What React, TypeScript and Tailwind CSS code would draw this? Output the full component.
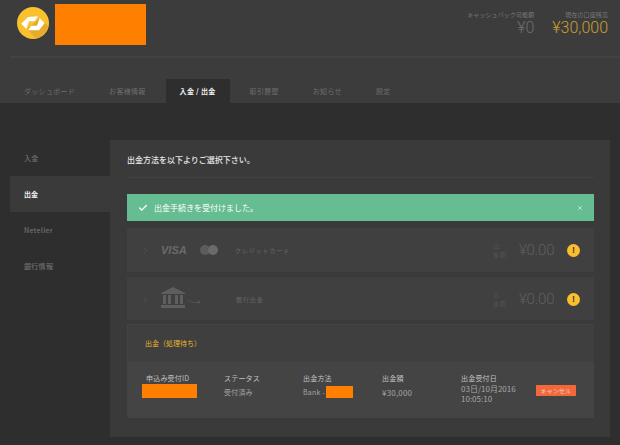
import { ChevronRight, Check, X } from "lucide-react";

const font = "font-['Noto_Sans_CJK_JP','Liberation_Sans',sans-serif]";

const tabs = ["ダッシュボード", "お客様情報", "入金 / 出金", "取引履歴", "お知らせ", "設定"];
const sideItems = ["入金", "出金", "Neteller", "銀行情報"];

function Logo() {
	return (
		<svg width="32" height="32" viewBox="0 0 32 32" className="shrink-0">
			<circle cx="16" cy="16" r="16" fill="#fbc02d" />
			<path d="M10 22 L19 31.7 A16 16 0 0 0 31.6 19.5 L23 11 Z" fill="#e5ab2c" />
			<path d="M4.3 16.7 L11 10 L21 9.3 L17.7 14.3 L12 14.3 L9.3 22 Z" fill="#fff" />
			<path d="M27.7 16 L22 23.3 L11 23.3 L14.3 18.7 L20 18.7 L22.7 11 Z" fill="#fff" />
		</svg>
	);
}

function Warn() {
	return (
		<div className="w-[13px] h-[13px] rounded-full bg-[#fbbf2d] flex items-center justify-center text-[#3a3a3a] text-[9px] font-bold leading-none font-['Liberation_Sans',sans-serif]">
			!
		</div>
	);
}

function Balance() {
	return (
		<div className="ml-auto flex items-center">
			<div className="w-[17px] text-[6px] leading-[9px] tracking-[1px] text-[#525252]">
				<div>出</div>
				<div>金額</div>
			</div>
			<span className="ml-[9px] w-[36px] text-[15px] tracking-[-0.2px] font-light text-[#5f5f5f] font-['Roboto',sans-serif]">¥0.00</span>
			<div className="ml-[12px]">
				<Warn />
			</div>
		</div>
	);
}

function Bank() {
	return (
		<svg width="42" height="22" viewBox="0 0 42 22">
			<path d="M12 0 L24 6 L24 7 L0 7 L0 6 Z" fill="#5e5e5e" />
			<path d="M2 8h3v9H2zM7 8h3v9H7zM14 8h3v9h-3zM19 8h3v9h-3z" fill="#5e5e5e" />
			<path d="M0 18h24v3H0z" fill="#5e5e5e" />
			<path d="M27 13 C31 16 34 16 39 15" stroke="#555" fill="none" strokeWidth="1" />
			<path d="M37 13 L40 15 L37 17 Z" fill="#555" />
		</svg>
	);
}

export default function App() {
	return (
		<div className={`w-[620px] h-[445px] overflow-hidden bg-[#2e2e2e] ${font}`}>
			<div className="h-[103px] bg-[#3c3c3c] flex flex-col">
				<div className="h-[58px] ml-[10px] border-b-2 border-[#424242] flex items-start pr-[12px]">
					<div className="ml-[7px] mt-[7px]">
						<Logo />
					</div>
					<div className="ml-[6px] mt-[4px] w-[91px] h-[41px] bg-[#ff8000]" />
					<div className="ml-auto mt-[10px] flex gap-[18px] text-right">
						<div>
							<div className="text-[6px] leading-[9px] tracking-[0.1px] text-[#777]">キャッシュバック可能額</div>
							<div className="text-[16px] leading-[17px] font-light text-[#6f6f6f] font-['Roboto',sans-serif]">¥0</div>
						</div>
						<div>
							<div className="text-[6px] leading-[9px] tracking-[0.1px] text-[#777]">現在の口座残高</div>
							<div className="text-[16px] leading-[17px] font-light text-[#c9a02f] font-['Roboto',sans-serif]">¥30,000</div>
						</div>
					</div>
				</div>
				<div className="mt-auto flex gap-[6px] pl-[10px]">
					{tabs.map((t, i) => (
						<div
							key={t}
							className={
								i === 2
									? "h-[24px] px-[14px] flex items-center text-[7px] tracking-[0.3px] font-bold text-[#eee] bg-[#2e2e2e]"
									: "h-[24px] px-[14px] flex items-center text-[7px] tracking-[0.3px] text-[#6e6e6e]"
							}
						>
							{t}
						</div>
					))}
				</div>
			</div>

			<div className="mt-[37px] ml-[10px] w-[600px] h-[297px] flex">
				<div className="w-[100px]">
					{sideItems.map((s, i) => (
						<div
							key={s}
							className={
								i === 1
									? "h-[36px] pl-[14px] flex items-center text-[7px] font-bold text-[#eee] bg-[#3a3a3a]"
									: "h-[36px] pl-[14px] flex items-center text-[7px] tracking-[0.3px] font-medium text-[#6e6e6e]"
							}
						>
							{s}
						</div>
					))}
				</div>
				<div className="flex-1 bg-[#3a3a3a] pl-[17px] pr-[16px]">
					<div className="h-[38px] pt-[3px] border-b border-[#434343] flex items-center text-[8px] font-medium text-[#e8e8e8]">
						出金方法を以下よりご選択下さい。
					</div>
					<div className="mt-[16px] h-[27px] bg-[#66bd92] flex items-center pl-[11px] pr-[11px] text-[8px] text-white">
						<Check size={10} strokeWidth={3} />
						<span className="ml-[6px]">出金手続きを受付けました。</span>
						<X size={6} strokeWidth={3} className="ml-auto text-[#dbeee4]" />
					</div>
					<div className="mt-[7px] h-[44px] bg-[#404040] flex items-center pl-[14px] pr-[14px]">
						<ChevronRight size={9} className="text-[#5a5a5a]" />
						<span className="ml-[11px] w-[39px] text-[11px] font-bold italic text-[#6a6a6a] font-['Liberation_Sans',sans-serif]">
							VISA
						</span>
						<div className="flex">
							<div className="w-[10px] h-[10px] rounded-full bg-[#5c5c5c]" />
							<div className="w-[10px] h-[10px] rounded-full bg-[#6a6a6a] -ml-[2px]" />
						</div>
						<span className="ml-[17px] text-[6px] tracking-[0.9px] font-medium text-[#606060]">クレジットカード</span>
						<Balance />
					</div>
					<div className="mt-[5px] h-[43px] pt-[1px] bg-[#404040] flex items-center pl-[14px] pr-[14px]">
						<ChevronRight size={9} className="text-[#5a5a5a]" />
						<div className="ml-[11px] w-[75px] -mt-[3px]">
							<Bank />
						</div>
						<span className="text-[6px] tracking-[0.9px] font-medium text-[#606060]">銀行出金</span>
						<Balance />
					</div>
					<div className="mt-[4px] h-[93px] bg-[#3f3f3f] border-t border-l border-[#444]">
						<div className="h-[37px] pl-[17px] flex items-center text-[7px] text-[#e8b22e]">出金（処理待ち）</div>
						<div className="h-[56px] bg-[#444] flex pl-[18px] pt-[11px] text-[7px] tracking-[0.2px] leading-[11px] text-[#a5a5a5]">
							<div className="w-[78px]">
								<div className="text-[#c0c0c0]">申込み受付ID</div>
								<div className="-ml-[4px] w-[55px] h-[14px] bg-[#ff8000]" />
							</div>
							<div className="w-[79px]">
								<div className="text-[#c0c0c0]">ステータス</div>
								<div className="mt-[3px]">受付済み</div>
							</div>
							<div className="w-[79px]">
								<div className="text-[#c0c0c0]">出金方法</div>
								<div className="mt-[2px] flex items-center">
									Bank -
									<span className="ml-[1px] w-[27px] h-[12px] bg-[#ff8000]" />
								</div>
							</div>
							<div className="w-[79px]">
								<div className="text-[#c0c0c0]">出金額</div>
								<div className="mt-[3px] text-[8px]">¥30,000</div>
							</div>
							<div className="w-[75px]">
								<div className="text-[#c0c0c0]">出金受付日</div>
								<div className="text-[8px] tracking-normal leading-[10px]">03日/10月2016</div>
								<div className="text-[8px] tracking-normal leading-[10px]">10:05:10</div>
							</div>
							<div className="mt-[12px] w-[40px] h-[11px] bg-[#f2683a] flex items-center justify-center text-[6px] text-[#f5d5c5]">
								キャンセル
							</div>
						</div>
					</div>
				</div>
			</div>
		</div>
	);
}
